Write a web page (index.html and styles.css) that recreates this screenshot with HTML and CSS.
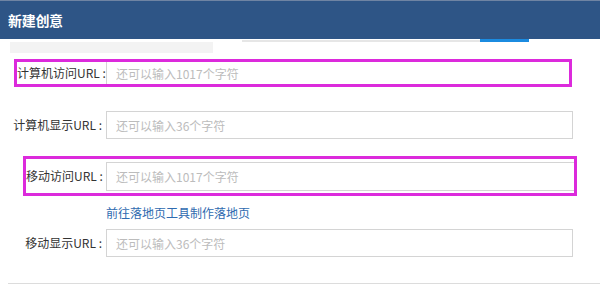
FILE: index.html
```html
<!DOCTYPE html>
<html lang="zh-CN">
<head>
  <meta charset="UTF-8">
  <title>新建创意</title>
  <link rel="stylesheet" href="styles.css">
</head>
<body>

  <header class="dlg-head">
    <h1>新建创意</h1>
  </header>

  <!-- leftovers of the tab strip under the header -->
  <div class="tab-strip">
    <div class="tab-ghost"></div>
    <div class="tab-line"></div>
    <div class="tab-active"></div>
  </div>

  <form class="url-form">
    <div class="mark mark-pc">
      <label class="field-label">计算机访问URL :</label>
      <input class="field-input" type="text" placeholder="还可以输入1017个字符">
    </div>

    <div class="row row-pc-show">
      <label class="field-label">计算机显示URL :</label>
      <input class="field-input" type="text" placeholder="还可以输入36个字符">
    </div>

    <div class="mark mark-mobile">
      <label class="field-label">移动访问URL :</label>
      <input class="field-input" type="text" placeholder="还可以输入1017个字符">
    </div>

    <a class="tool-link" href="#">前往落地页工具制作落地页</a>

    <div class="row row-mobile-show">
      <label class="field-label">移动显示URL :</label>
      <input class="field-input" type="text" placeholder="还可以输入36个字符">
    </div>
  </form>

  <div class="bottom-line"></div>

</body>
</html>
```

FILE: styles.css
```css
* {
  margin: 0;
  padding: 0;
  box-sizing: border-box;
}

body {
  font-family: "Noto Sans CJK SC", "Liberation Sans", sans-serif;
  font-size: 12px;
  color: #333;
  background-color: #fff;
  width: 600px;
  overflow: hidden;
}

.dlg-head {
  height: 39px;
  background-color: #2e5586;
  border-top: 1px solid #6f84a3;
  display: flex;
  align-items: center;
  padding-left: 8px;
}

.dlg-head h1 {
  font-size: 14px;
  font-weight: bold;
  color: #fff;
  letter-spacing: -0.3px;
}

.tab-strip {
  display: flex;
  height: 14px;
}

.tab-ghost {
  width: 203px;
  height: 11px;
  margin: 3px 0 0 10px;
  background-color: #f3f3f3;
}

.tab-line {
  width: 238px;
  height: 2px;
  margin-left: 29px;
  margin-top: 1px;
  background-color: #e6e6e6;
}

.tab-active {
  width: 49px;
  height: 3px;
  background-color: #1b8be0;
}

.url-form {
  display: flex;
  flex-direction: column;
  padding-top: 6px;
}

.row,
.mark {
  display: flex;
  align-items: center;
}

.field-label {
  flex-shrink: 0;
  text-align: right;
  padding-right: 4px;
  white-space: nowrap;
  line-height: 1;
}

.field-input {
  font-family: inherit;
  font-size: 12px;
  color: #333;
  border: 1px solid #d4d4d4;
  background-color: #fff;
  padding-left: 9px;
  outline: none;
}

.field-input::placeholder {
  color: #bcbcbc;
}

/* magenta highlight boxes */
.mark {
  border: 3px solid #dc2adc;
}

.mark-pc {
  width: 558px;
  height: 28px;
  margin-left: 14px;
}

.mark-pc .field-label {
  width: 89px;
  padding-right: 3px;
}

.mark-pc .field-input {
  width: 463px;
  height: 22px;
  border-top: none;
  border-bottom: none;
  border-right: none;
}

.row-pc-show {
  margin-top: 24px;
}

.row .field-label {
  width: 106px;
}

.row .field-input {
  width: 467px;
  height: 28px;
}

.mark-mobile {
  width: 554px;
  height: 40px;
  margin-left: 23px;
  margin-top: 17px;
}

.mark-mobile .field-label {
  width: 80px;
}

.mark-mobile .field-input {
  width: 468px;
  height: 29px;
  border-right: none;
}

.tool-link {
  margin: 8px 0 0 106px;
  color: #2f6bb0;
  text-decoration: none;
  line-height: 17px;
}

.row-mobile-show {
  margin-top: 8px;
}

.bottom-line {
  margin: 26px 0 0 8px;
  height: 1px;
  background-color: #dcdcdc;
}
```
